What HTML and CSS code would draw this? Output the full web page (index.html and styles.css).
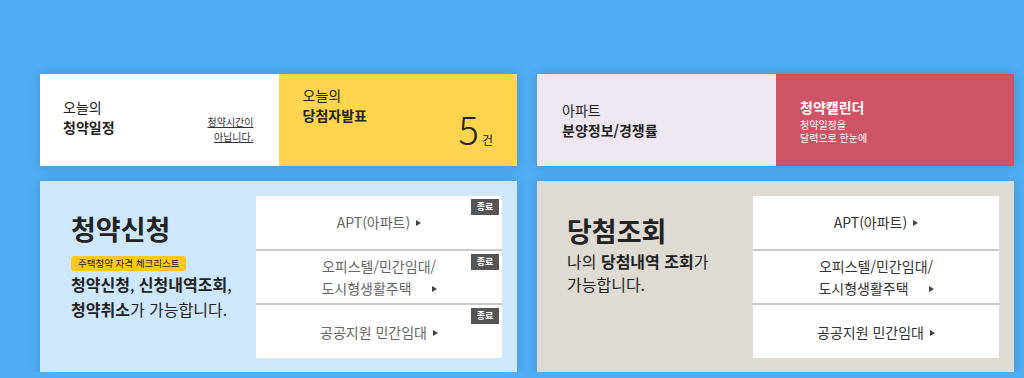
FILE: index.html
```html
<!DOCTYPE html>
<html lang="ko">
<head>
  <meta charset="UTF-8" />
  <meta name="viewport" content="width=device-width, initial-scale=1.0"/>
  <title>청약홈</title>
  <link rel="stylesheet" href="styles.css">
</head>
<body>
  <div class="wrap">
    <!-- 청약신청 -->
    <section class="col">
      <div class="quick">
        <a class="tile tile-white" href="#">
          <div class="tile-head">
            <span>오늘의</span>
            <strong>청약일정</strong>
          </div>
          <span class="tile-note">청약시간이<br>아닙니다.</span>
        </a>
        <a class="tile tile-yellow" href="#">
          <div class="tile-head">
            <span>오늘의</span>
            <strong>당첨자발표</strong>
          </div>
          <span class="count"><b>5</b>건</span>
        </a>
      </div>
      <div class="panel panel-blue">
        <div class="panel-info">
          <h2>청약신청</h2>
          <span class="check">주택청약 자격 체크리스트</span>
          <p><b>청약신청</b>, <b>신청내역조회</b>,<br><b>청약취소</b>가 가능합니다.</p>
        </div>
        <ul class="menu">
          <li><a href="#">APT(아파트)<i class="arr"></i></a><span class="end">종료</span></li>
          <li><a href="#">오피스텔/민간임대/<br>도시형생활주택<i class="arr wide"></i></a><span class="end">종료</span></li>
          <li><a href="#">공공지원 민간임대<i class="arr"></i></a><span class="end">종료</span></li>
        </ul>
      </div>
    </section>

    <!-- 당첨조회 -->
    <section class="col">
      <div class="quick">
        <a class="tile tile-pink" href="#">
          <div class="tile-head">
            <span>아파트</span>
            <strong>분양정보/경쟁률</strong>
          </div>
        </a>
        <a class="tile tile-red" href="#">
          <div class="tile-head">
            <strong>청약캘린더</strong>
            <small>청약일정을<br>달력으로 한눈에</small>
          </div>
        </a>
      </div>
      <div class="panel panel-beige">
        <div class="panel-info">
          <h2>당첨조회</h2>
          <p class="lookup">나의 <b>당첨내역 조회</b>가<br>가능합니다.</p>
        </div>
        <ul class="menu dark">
          <li><a href="#">APT(아파트)<i class="arr"></i></a></li>
          <li><a href="#">오피스텔/민간임대/<br>도시형생활주택<i class="arr wide"></i></a></li>
          <li><a href="#">공공지원 민간임대<i class="arr"></i></a></li>
        </ul>
      </div>
    </section>
  </div>
</body>
</html>
```

FILE: styles.css
```css
body {
  margin: 0;
  font-family: "Noto Sans CJK KR", "Noto Sans", sans-serif;
  background: #4fadf2;
  color: #222;
}
a {
  color: inherit;
  text-decoration: none;
}
.wrap {
  display: flex;
  gap: 20px;
  padding: 74px 0 0 40px;
}
.col {
  width: 477px;
  display: flex;
  flex-direction: column;
  gap: 15px;
}

/* top quick tiles */
.quick {
  display: flex;
  height: 92px;
  box-shadow: 0 0 10px rgba(0, 0, 0, 0.15);
}
.tile {
  flex: 1;
  display: flex;
  box-sizing: border-box;
  padding: 0 24px;
}
.tile-head {
  display: flex;
  flex-direction: column;
  font-size: 14px;
  line-height: 20px;
}
.tile-white {
  background: #fff;
  align-items: center;
  justify-content: space-between;
  padding: 0 25px 6px 23px;
}
.tile-note {
  font-size: 10px;
  line-height: 15px;
  text-align: right;
  text-decoration: underline;
  margin-top: 24px;
  color: #333;
}
.tile-yellow {
  background: #ffd44f;
  flex-direction: column;
  padding: 11px 24px 0;
}
.count {
  align-self: flex-end;
  margin-top: -10px;
  font-size: 12px;
  line-height: 1;
}
.count b {
  font-size: 38px;
  line-height: 28px;
  font-weight: 300;
  margin-right: 3px;
}
.tile-pink {
  background: #ede7ef;
  align-items: center;
  padding-left: 25px;
}
.tile-red {
  background: #cf5366;
  color: #fff;
  align-items: center;
}
.tile-red small {
  font-size: 10px;
  line-height: 13px;
  margin-top: 1px;
}

/* bottom panels */
.panel {
  height: 191px;
  display: flex;
  justify-content: space-between;
  box-sizing: border-box;
  padding: 15px 15px 14px 31px;
  box-shadow: 0 0 10px rgba(0, 0, 0, 0.15);
}
.panel-blue {
  background: #cde8fd;
}
.panel-beige {
  background: #dedbd5;
  padding-left: 30px;
}
.panel-info {
  padding-top: 17px;
}
.panel-info h2 {
  margin: 0;
  font-size: 27px;
  line-height: 31px;
  font-weight: bold;
}
.check {
  display: inline-block;
  margin-top: 12px;
  padding: 0 7px;
  background: #ffc81e;
  border-radius: 3px;
  font-size: 9.5px;
  line-height: 15px;
}
.panel-info p {
  margin: 0;
  font-size: 16px;
  line-height: 25px;
}
.panel-info p.lookup {
  margin-top: 4px;
  line-height: 23px;
}
.panel-beige h2 {
  margin-top: 2px;
}

.menu {
  list-style: none;
  margin: 0;
  padding: 0;
  width: 246px;
  background: #fff;
  display: flex;
  flex-direction: column;
}
.menu li {
  position: relative;
  flex: 1;
  display: flex;
  align-items: center;
  justify-content: center;
  text-align: center;
}
.menu li + li {
  border-top: 2px solid #c9c9c9;
}
.menu a {
  font-size: 14px;
  line-height: 22px;
  color: #666;
}
.menu.dark a {
  color: #333;
}
.arr {
  display: inline-block;
  margin-left: 6px;
  border-left: 5px solid #444;
  border-top: 3px solid transparent;
  border-bottom: 3px solid transparent;
  vertical-align: 2px;
}
.arr.wide {
  margin-left: 20px;
}
.end {
  position: absolute;
  top: 3px;
  right: 3px;
  width: 28px;
  height: 16px;
  background: #555;
  color: #fff;
  font-size: 9px;
  line-height: 16px;
  text-align: center;
  font-weight: bold;
}
```
